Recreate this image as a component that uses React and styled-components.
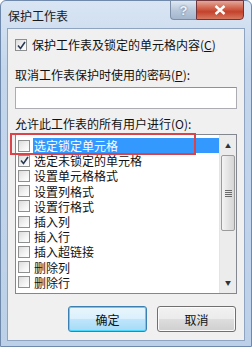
import React from 'react';
import styled, { createGlobalStyle } from 'styled-components';

const items = [
  { text: '选定锁定单元格', checked: false, selected: true },
  { text: '选定未锁定的单元格', checked: true },
  { text: '设置单元格格式' },
  { text: '设置列格式' },
  { text: '设置行格式' },
  { text: '插入列' },
  { text: '插入行' },
  { text: '插入超链接' },
  { text: '删除列' },
  { text: '删除行' },
];

function Check({ checked }) {
  return (
    <Box>
      {checked && (
        <svg width="9" height="9" viewBox="0 0 9 9">
          <path d="M1 4.5 L3.5 7.5 L8 1" fill="none" stroke="#2a3a55" strokeWidth="1.6" />
        </svg>
      )}
    </Box>
  );
}

export default function App() {
  return (
    <>
      <GlobalStyle />
      <Window>
        <TitleBar>
          <Title>保护工作表</Title>
          <Controls>
            <HelpButton>?</HelpButton>
            <CloseButton>
              <svg width="12" height="10" viewBox="0 0 12 10">
                <path d="M1.5 1 L10.5 9 M10.5 1 L1.5 9" stroke="#fff" strokeWidth="2.4" />
              </svg>
            </CloseButton>
          </Controls>
        </TitleBar>
        <Client>
          <CheckRow>
            <Check checked />
            <span>
              保护工作表及锁定的单元格内容(<u>C</u>)
            </span>
          </CheckRow>
          <Label $top={14}>
            取消工作表保护时使用的密码(<u>P</u>):
          </Label>
          <Input />
          <Label $top={7}>允许此工作表的所有用户进行(O):</Label>
          <ListWrap>
            <ListBox>
              <Items>
                {items.map(it => (
                  <Item key={it.text}>
                    <Check checked={it.checked} />
                    <ItemText $selected={it.selected}>{it.text}</ItemText>
                  </Item>
                ))}
              </Items>
              <Scrollbar>
                <Arrow>▲</Arrow>
                <Track>
                  <Thumb>
                    <Grip />
                  </Thumb>
                </Track>
                <Arrow>▼</Arrow>
              </Scrollbar>
            </ListBox>
            <RedMark />
          </ListWrap>
          <Buttons>
            <Button $focused>确定</Button>
            <Button>取消</Button>
          </Buttons>
        </Client>
      </Window>
    </>
  );
}

const GlobalStyle = createGlobalStyle`
  body {
    margin: 0;
    font-family: "Noto Sans CJK SC", "Liberation Sans", sans-serif;
    background: #fff;
  }
`;

const Window = styled.div`
  width: 252px;
  height: 347px;
  box-sizing: border-box;
  display: flex;
  flex-direction: column;
  padding: 0 6px 5px 6px;
  background: linear-gradient(180deg, #d9e5f3 0%, #c3d6ec 20%, #bcd0e8 100%);
  border: 1px solid #6f89ac;
  border-radius: 6px 6px 0 0;
`;

const TitleBar = styled.div`
  height: 27px;
  display: flex;
  justify-content: space-between;
  align-items: flex-start;
`;

const Title = styled.div`
  margin: 7px 0 0 1px;
  font-size: 12px;
  line-height: 16px;
  color: #1a1a1a;
`;

const Controls = styled.div`
  display: flex;
  margin-top: -1px;
  margin-right: 1px;
`;

const HelpButton = styled.div`
  width: 25px;
  height: 18px;
  display: flex;
  align-items: center;
  justify-content: center;
  font-family: "Liberation Sans", sans-serif;
  font-weight: bold;
  font-size: 13px;
  color: #eef3f9;
  text-shadow: 0 0 2px #4d6380;
  background: linear-gradient(180deg, #dfe8f2 0%, #b9c8db 50%, #a4b6cd 100%);
  border: 1px solid #7d8fa8;
  border-right: none;
  border-radius: 0 0 0 4px;
`;

const CloseButton = styled.div`
  width: 46px;
  height: 18px;
  display: flex;
  align-items: center;
  justify-content: center;
  background: linear-gradient(180deg, #e2a89a 0%, #cf5a43 45%, #c3422c 60%, #d8785f 100%);
  border: 1px solid #70343a;
  border-radius: 0 0 4px 0;
`;

const Client = styled.div`
  flex: 1;
  display: flex;
  flex-direction: column;
  padding: 8px 7px 0 7px;
  background: #f0f0f0;
  border: 1px solid #8fa4c0;
  font-size: 12px;
  color: #111;
`;

const CheckRow = styled.div`
  display: flex;
  align-items: center;
  gap: 5px;
  height: 16px;
  line-height: 16px;
`;

const Box = styled.span`
  flex: none;
  width: 10px;
  height: 10px;
  display: flex;
  align-items: center;
  justify-content: center;
  border: 1px solid #8e8f8f;
  background: linear-gradient(135deg, #dcdcdc 0%, #f4f4f4 60%, #fff 100%);
`;

const Label = styled.div`
  margin-top: ${p => p.$top}px;
  line-height: 16px;
  height: 16px;
`;

const Input = styled.div`
  margin-top: 4px;
  height: 22px;
  box-sizing: border-box;
  background: #fff;
  border: 1px solid #abadb3;
  border-top-color: #8e9199;
`;

const ListWrap = styled.div`
  position: relative;
  margin-top: 2px;
`;

const ListBox = styled.div`
  height: 160px;
  box-sizing: border-box;
  display: grid;
  grid-template-columns: 1fr 17px;
  background: #fff;
  border: 1px solid #828790;
  overflow: hidden;
`;

const Items = styled.div`
  padding: 3px 0 0 2px;
`;

const Item = styled.div`
  display: flex;
  align-items: center;
  gap: 3px;
  height: 15.2px;
  line-height: 15px;
`;

const ItemText = styled.span`
  flex: 1;
  padding-left: 1px;
  background: ${p => (p.$selected ? '#3399ff' : 'transparent')};
  color: ${p => (p.$selected ? '#fff' : '#111')};
`;

const Scrollbar = styled.div`
  display: flex;
  flex-direction: column;
  padding: 2px 0;
  background: #ececec;
  border-left: 1px solid #e4e4e4;
`;

const Arrow = styled.div`
  height: 17px;
  display: flex;
  align-items: center;
  justify-content: center;
  font-size: 6px;
  color: #333;
`;

const Track = styled.div`
  flex: 1;
  padding: 1px 1px;
`;

const Thumb = styled.div`
  height: 76px;
  box-sizing: border-box;
  display: flex;
  align-items: center;
  justify-content: center;
  background: linear-gradient(90deg, #f4f4f4 0%, #e4e4e4 50%, #d6d6d6 100%);
  border: 1px solid #9b9b9b;
  border-radius: 2px;
`;

const Grip = styled.div`
  width: 7px;
  height: 7px;
  background: repeating-linear-gradient(180deg, #6a6a6a 0 1px, transparent 1px 2px);
`;

const RedMark = styled.div`
  position: absolute;
  left: -5px;
  top: -1px;
  width: 186px;
  height: 22px;
  box-sizing: border-box;
  border: 2px solid #d9434a;
`;

const Buttons = styled.div`
  margin-top: 12px;
  display: flex;
  justify-content: flex-end;
  gap: 10px;
  padding-right: 1px;
`;

const Button = styled.div`
  width: 79px;
  height: 26px;
  box-sizing: border-box;
  display: flex;
  align-items: center;
  justify-content: center;
  font-size: 12px;
  color: #111;
  border-radius: 3px;
  border: 1px solid ${p => (p.$focused ? '#3c7fb1' : '#707070')};
  box-shadow: ${p => (p.$focused ? 'inset 0 0 0 1px #48d8fb' : 'inset 0 0 0 1px #fbfbfb')};
  background: ${p =>
    p.$focused
      ? 'linear-gradient(180deg, #eaf6fd 0%, #d9f0fc 50%, #bee6fd 51%, #a7d9f5 100%)'
      : 'linear-gradient(180deg, #f2f2f2 0%, #ebebeb 50%, #dddddd 51%, #cfcfcf 100%)'};
`;
